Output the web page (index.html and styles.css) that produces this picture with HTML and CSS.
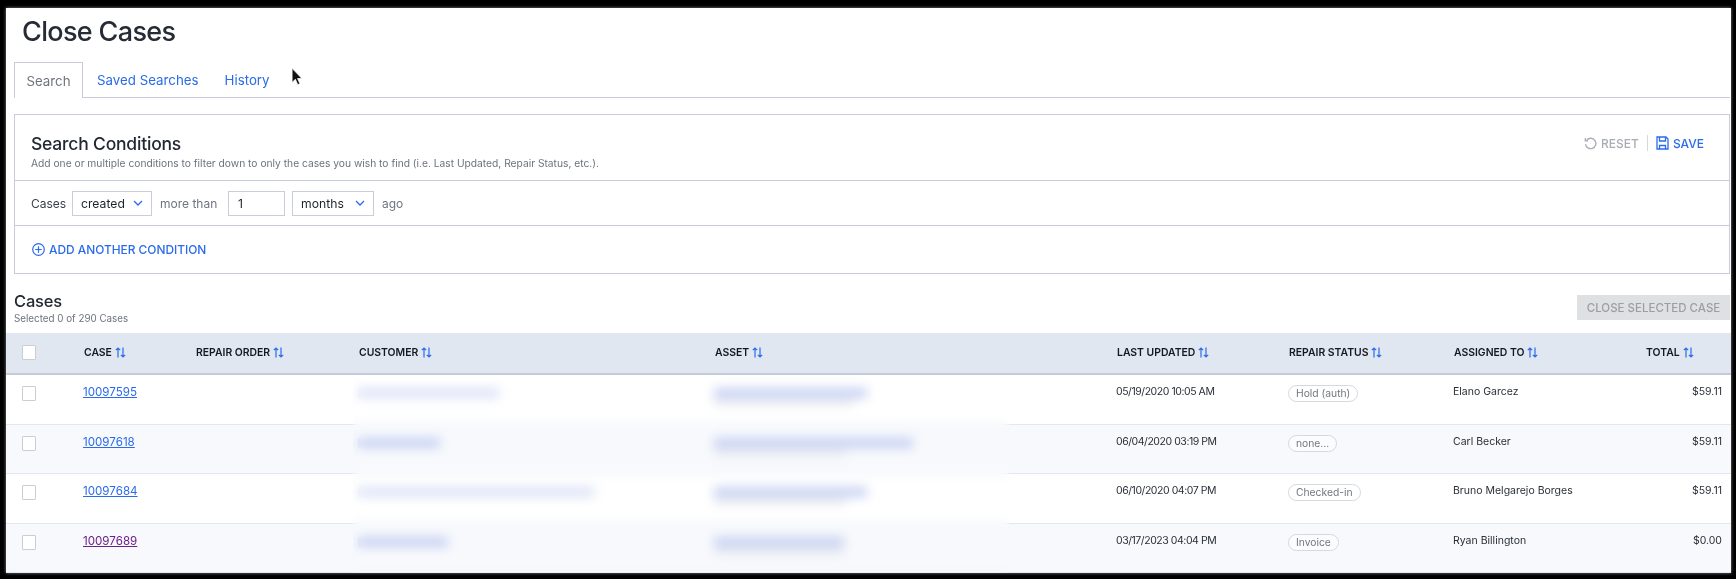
FILE: index.html
```html
<!DOCTYPE html>
<html lang="en">
<head>
<meta charset="utf-8">
<title>Close Cases</title>
<link rel="stylesheet" href="styles.css">
</head>
<body>
<svg class="defs" width="0" height="0" aria-hidden="true">
  <symbol id="sort" viewBox="0 0 11 11"><path d="M3 10.500V1M.8 3.200 3 1l2.200 2.200M8 .5V10M5.800 7.800 8 10l2.200-2.200" fill="none" stroke="currentColor" stroke-width="1.200"/></symbol>
  <symbol id="chev" viewBox="0 0 10 6"><path d="M1 1l4 4 4-4" fill="none" stroke="currentColor" stroke-width="1.300"/></symbol>
</svg>
<main class="screen">
  <h1 class="page-title">Close Cases</h1>
  <nav class="tabs">
    <a class="tab active">Search</a>
    <a class="tab">Saved Searches</a>
    <a class="tab">History</a>
  </nav>
  <section class="panel">
    <header class="panel-head">
      <div>
        <h2 class="panel-title">Search Conditions</h2>
        <p class="panel-sub">Add one or multiple conditions to filter down to only the cases you wish to find (i.e. Last Updated, Repair Status, etc.).</p>
      </div>
      <div class="actions">
        <span class="action muted"><svg width="13" height="13" viewBox="0 0 14 14"><path d="M3 3.200A5.600 5.600 0 1 1 1.600 7.600M1.400 1.200v3h3" fill="none" stroke="currentColor" stroke-width="1.400"/></svg>RESET</span>
        <span class="divider"></span>
        <span class="action link"><svg width="13" height="14" viewBox="0 0 13 14"><path d="M1 1h9l2 2v10H1zM3.500 1v4h6V1M3.500 13V9.500h6V13" fill="none" stroke="currentColor" stroke-width="1.300"/></svg>SAVE</span>
      </div>
    </header>
    <div class="cond-row">
      <span class="cond-label">Cases</span>
      <span class="field sel-created">created<svg class="chev" width="10" height="6"><use href="#chev"/></svg></span>
      <span class="cond-text cond-than">more than</span>
      <span class="field inp-num">1</span>
      <span class="field sel-months">months<svg class="chev" width="10" height="6"><use href="#chev"/></svg></span>
      <span class="cond-text">ago</span>
    </div>
    <div class="add-row">
      <svg width="13" height="13" viewBox="0 0 13 13"><circle cx="6.500" cy="6.500" r="5.800" fill="none" stroke="currentColor" stroke-width="1.200"/><path d="M6.500 3.200v6.600M3.200 6.500h6.600" stroke="currentColor" stroke-width="1.200"/></svg>
      <span>ADD ANOTHER CONDITION</span>
    </div>
  </section>
  <div class="cases-head">
    <div>
      <h2 class="cases-title">Cases</h2>
      <p class="cases-sub">Selected 0 of 290 Cases</p>
    </div>
    <button class="close-btn" disabled>CLOSE SELECTED CASE</button>
  </div>
  <div class="table">
    <div class="grid thead">
      <span class="check"></span>
      <span class="th">CASE<svg class="sort"><use href="#sort"/></svg></span>
      <span class="th">REPAIR ORDER<svg class="sort"><use href="#sort"/></svg></span>
      <span class="th">CUSTOMER<svg class="sort"><use href="#sort"/></svg></span>
      <span class="th">ASSET<svg class="sort"><use href="#sort"/></svg></span>
      <span class="th">LAST UPDATED<svg class="sort"><use href="#sort"/></svg></span>
      <span class="th">REPAIR STATUS<svg class="sort"><use href="#sort"/></svg></span>
      <span class="th">ASSIGNED TO<svg class="sort"><use href="#sort"/></svg></span>
      <span class="th">TOTAL<svg class="sort"><use href="#sort"/></svg></span>
    </div>
    <div class="grid row">
      <span class="check"></span><a class="case">10097595</a><span></span>
      <span class="hidden-cell"><i class="bar pale c1"></i></span>
      <span class="hidden-cell"><i class="bar a1"></i><i class="bar sub a1s"></i></span>
      <span class="td date">05/19/2020 10:05 AM</span><span class="td"><b class="pill">Hold (auth)</b></span><span class="td">Elano Garcez</span><span class="td amount">$59.11</span>
    </div>
    <div class="grid row alt">
      <span class="check"></span><a class="case">10097618</a><span></span>
      <span class="hidden-cell"><i class="bar c2"></i></span>
      <span class="hidden-cell"><i class="bar a2"></i><i class="bar sub a2s"></i></span>
      <span class="td date">06/04/2020 03:19 PM</span><span class="td"><b class="pill">none...</b></span><span class="td">Carl Becker</span><span class="td amount">$59.11</span>
    </div>
    <div class="grid row">
      <span class="check"></span><a class="case">10097684</a><span></span>
      <span class="hidden-cell"><i class="bar pale c3"></i></span>
      <span class="hidden-cell"><i class="bar a1"></i><i class="bar sub a2s"></i></span>
      <span class="td date">06/10/2020 04:07 PM</span><span class="td"><b class="pill">Checked-in</b></span><span class="td">Bruno Melgarejo Borges</span><span class="td amount">$59.11</span>
    </div>
    <div class="grid row alt">
      <span class="check"></span><a class="case visited">10097689</a><span></span>
      <span class="hidden-cell"><i class="bar c4"></i></span>
      <span class="hidden-cell"><i class="bar a4"></i><i class="bar sub a4s"></i></span>
      <span class="td date">03/17/2023 04:04 PM</span><span class="td"><b class="pill">Invoice</b></span><span class="td">Ryan Billington</span><span class="td amount">$0.00</span>
    </div>
    <div class="privacy-blur"></div>
  </div>
  <svg class="cursor" width="12" height="19" viewBox="0 0 11 17"><path d="M1 1v13l3-3 2.200 5 2-1-2.200-4.600h4z" fill="#111" stroke="#fff" stroke-width=".7"/></svg>
</main>
</body>
</html>
```
FILE: styles.css
```css
* { box-sizing: border-box; }
html, body { margin: 0; height: 579px; overflow: hidden; background: #000; }
body { font-family: Inter, "Noto Sans", sans-serif; color: #232a35; }
.defs { position: absolute; }
.screen { position: relative; margin: 8px 5px 6px 6px; height: 565px; background: #fff; overflow: hidden; box-shadow: 0 0 3px #888; filter: blur(.35px); }
.page-title { margin: 8px 0 0 16px; height: 32px; font-size: 27px; line-height: 32px; font-weight: 500; letter-spacing: -.65px; color: #262b36; }
.tabs { display: flex; margin: 14px 1px 0 8px; height: 36px; border-bottom: 1px solid #c8cdd9; font-size: 13.300px; }
.tab { display: flex; align-items: center; height: 36px; padding: 0 13px; color: #2b6bea; }
.tab.active { width: 69px; justify-content: center; padding: 0; color: #6f7580; background: #fff; border: 1px solid #c8cdd9; border-bottom: 0; }
.tab:nth-child(2) { padding-left: 14px; padding-right: 13px; }
.panel { margin: 16px 1px 0 8px; border: 1px solid #c8cdd9; }
.panel-head { display: flex; justify-content: space-between; height: 66px; padding: 18px 25px 0 16px; border-bottom: 1px solid #c8cdd9; }
.panel-title { margin: 0; font-size: 17.500px; line-height: 22px; font-weight: 500; letter-spacing: -.2px; color: #232833; }
.panel-sub { margin: 1px 0 0; font-size: 10.240px; line-height: 14px; color: #6c727e; }
.actions { display: flex; align-items: center; gap: 8px; height: 18px; margin-top: 1px; font-size: 12px; font-weight: 500; }
.action { display: flex; align-items: center; gap: 4px; }
.muted { color: #a9acb3; }
.link { color: #2b6bea; }
.divider { width: 1px; height: 16px; background: #d5d8de; }
.cond-row { display: flex; align-items: center; height: 45px; padding-left: 16px; border-bottom: 1px solid #c8cdd9; font-size: 12px; color: #6e7480; }
.cond-label { width: 41px; color: #3b414c; }
.field { display: flex; align-items: center; justify-content: space-between; height: 25px; padding: 0 8px; border: 1px solid #c8cdd9; color: #1e2329; font-size: 12.200px; }
.chev { color: #2b6bea; }
.sel-created { width: 80px; }
.inp-num { width: 57px; padding-left: 9px; }
.sel-months { width: 82px; margin: 0 8px 0 7px; }
.cond-than { width: 76px; padding-left: 8px; }
.add-row { display: flex; align-items: center; gap: 4px; height: 47px; padding: 0 0 1px 17px; font-size: 11.900px; color: #2b6bea; font-weight: 500; }
.cases-head { display: flex; justify-content: space-between; margin: 17px 0 0 8px; height: 42px; }
.cases-title { margin: 0; font-size: 16.500px; line-height: 20px; font-weight: 500; letter-spacing: -.2px; color: #232833; }
.cases-sub { margin: 1px 0 0; font-size: 9.800px; line-height: 13px; color: #6c727e; }
.close-btn { width: 153px; height: 25px; margin: 4px 1px 0 0; border: 0; padding: 0; background: #dfe0e2; color: #9b9ea3; font: 500 11.500px Inter, sans-serif; }
.table { position: relative; }
.grid { display: grid; grid-template-columns: 77px 112px 163px 356px 402px 172px 165px 192px 1fr; }
.check { display: block; width: 14px; height: 15px; margin-left: 16px; background: #fff; border: 1px solid #c9cdd4; border-radius: 1px; }
.thead { height: 42px; align-items: center; background: #e1e7f1; box-shadow: inset 0 -2px 0 #c6cbd9; padding-bottom: 3px; }
.th { display: flex; align-items: center; gap: 3px; font-size: 10.400px; font-weight: 600; color: #14181f; padding-left: 1px; }
.sort { width: 11px; height: 11px; color: #2b6bea; }
.row { height: 49.500px; border-bottom: 1px solid #e3e7f0; font-size: 10.500px; line-height: 14px; color: #2a2f38; }
.row.alt { background: #f7f9fc; }
.row .check { margin-top: 11px; }
.case { padding-top: 10px; font-size: 11.600px; color: #2b6bea; text-decoration: underline; }
.case.visited { color: #6c2188; }
.td { padding-top: 10px; }
.date { letter-spacing: -.45px; }
.amount { padding-right: 9px; text-align: right; }
.pill { display: inline-block; height: 17px; padding: 0 7px; border: 1px solid #d5d8de; border-radius: 9px; font-size: 10.300px; font-weight: 400; line-height: 15px; color: #73777f; background: #fff; }
.alt .pill { background: #fbfcfd; }
.hidden-cell { display: flex; flex-direction: column; gap: 2px; padding-top: 13px; }
.bar { display: block; height: 10px; background: #c8d2f2; }
.bar.pale { background: #dde3f7; }
.bar.sub { height: 5px; background: #e2e4ed; }
.c1 { width: 141px; } .c2 { width: 82px; } .c3 { width: 236px; } .c4 { width: 90px; }
.a1 { width: 153px; } .a1s { width: 140px; } .a2 { width: 199px; } .a2s { width: 132px; } .a4 { width: 130px; } .a4s { width: 130px; }
.privacy-blur { position: absolute; left: 347px; top: 43px; width: 656px; height: 200px; backdrop-filter: blur(5.500px); }
.cursor { position: absolute; left: 285px; top: 59px; }
```
